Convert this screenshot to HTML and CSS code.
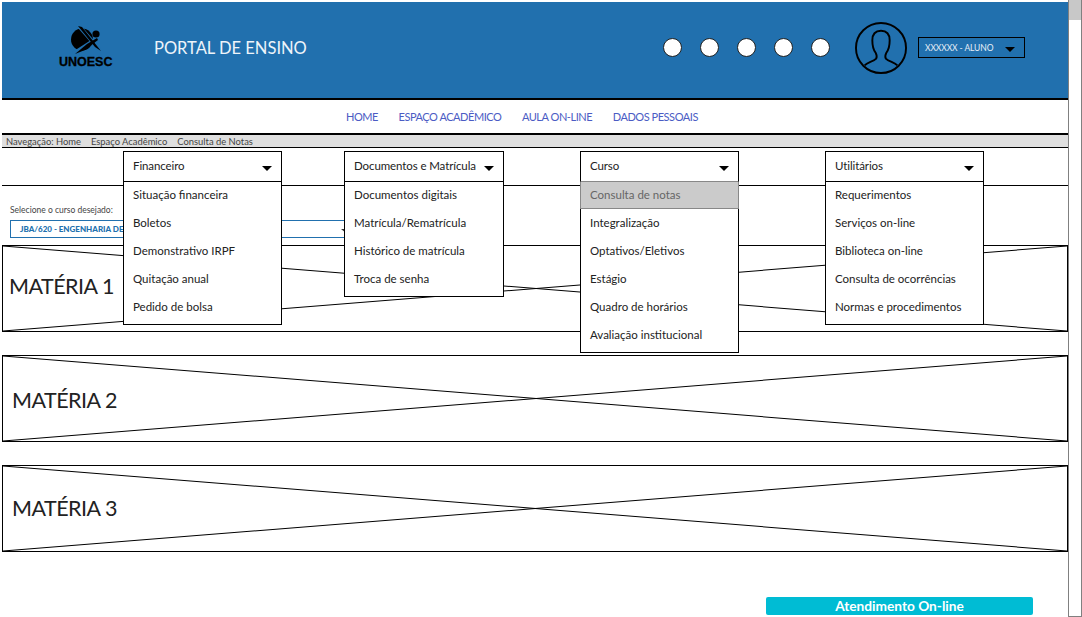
FILE: index.html
```html
<!DOCTYPE html>
<html lang="pt">

<head>
    <meta charset="utf-8">
    <title>Portal de Ensino</title>
    <link rel="stylesheet" href="styles.css">
</head>

<body>
    <div class="page">
        <header class="topbar">
            <div class="logo">
                <svg class="logo-mark" width="32" height="28" viewBox="0 0 32 28">
                    <circle class="logo-ball" cx="11" cy="13.500" r="11" />
                    <path class="logo-cut" d="M7 -1 L28 23" />
                    <path class="logo-cut" d="M2 28 L27 12" />
                    <path class="logo-ball" d="M7 0 L11 1 L30 25 L24 21 Z" />
                    <path class="logo-ball" d="M4 28 L16 18 L26 12 L27 14 L14 24 Z" />
                    <circle class="logo-ball" cx="25" cy="8" r="3.600" />
                </svg>
                <span class="logo-name">UNOESC</span>
            </div>
            <h1 class="title">PORTAL DE ENSINO</h1>
            <div class="dots">
                <span class="dot"></span>
                <span class="dot"></span>
                <span class="dot"></span>
                <span class="dot"></span>
                <span class="dot"></span>
            </div>
            <svg class="avatar" width="52" height="52" viewBox="0 0 54 54">
                <circle cx="27" cy="27" r="26" />
                <path d="M10 45 C13 42 19 41 22 38 C23 36 22.500 34 21.500 32 C19 29 18 25 18 19 C18 12 22 9 27 9 C32 9 36 12 36 19 C36 25 35 29 32.500 32 C31.500 34 31 36 32 38 C35 41 41 42 44 45" />
            </svg>
            <div class="user">
                <span>XXXXXX - ALUNO</span>
                <i class="caret"></i>
            </div>
        </header>

        <nav class="mainnav">
            <a href="#">HOME</a>
            <a href="#">ESPAÇO ACADÊMICO</a>
            <a href="#">AULA ON-LINE</a>
            <a href="#">DADOS PESSOAIS</a>
        </nav>

        <div class="crumbs">
            <span>Navegação: Home</span>
            <span>Espaço Acadêmico</span>
            <span>Consulta de Notas</span>
        </div>

        <div class="menus">
            <div class="menu menu-fin">
                <div class="menu-head">Financeiro <i class="caret"></i></div>
                <ul class="menu-list">
                    <li>Situação financeira</li>
                    <li>Boletos</li>
                    <li>Demonstrativo IRPF</li>
                    <li>Quitação anual</li>
                    <li>Pedido de bolsa</li>
                </ul>
            </div>
            <div class="menu menu-doc">
                <div class="menu-head">Documentos e Matrícula <i class="caret"></i></div>
                <ul class="menu-list">
                    <li>Documentos digitais</li>
                    <li>Matrícula/Rematrícula</li>
                    <li>Histórico de matrícula</li>
                    <li>Troca de senha</li>
                </ul>
            </div>
            <div class="menu menu-cur">
                <div class="menu-head">Curso <i class="caret"></i></div>
                <ul class="menu-list">
                    <li class="active">Consulta de notas</li>
                    <li>Integralização</li>
                    <li>Optativos/Eletivos</li>
                    <li>Estágio</li>
                    <li>Quadro de horários</li>
                    <li>Avaliação institucional</li>
                </ul>
            </div>
            <div class="menu menu-uti">
                <div class="menu-head">Utilitários <i class="caret"></i></div>
                <ul class="menu-list">
                    <li>Requerimentos</li>
                    <li>Serviços on-line</li>
                    <li>Biblioteca on-line</li>
                    <li>Consulta de ocorrências</li>
                    <li>Normas e procedimentos</li>
                </ul>
            </div>
        </div>

        <section class="course">
            <label class="course-label">Selecione o curso desejado:</label>
            <div class="course-box">
                <span class="course-name">JBA/620 - ENGENHARIA DE</span>
                <i class="caret"></i>
            </div>
        </section>

        <div class="card card-one">
            <svg class="cross" viewBox="0 0 100 100" preserveAspectRatio="none">
                <line x1="0" y1="0" x2="100" y2="100" />
                <line x1="0" y1="100" x2="100" y2="0" />
            </svg>
            <span class="card-name">MATÉRIA 1</span>
        </div>
        <div class="card card-two">
            <svg class="cross" viewBox="0 0 100 100" preserveAspectRatio="none">
                <line x1="0" y1="0" x2="100" y2="100" />
                <line x1="0" y1="100" x2="100" y2="0" />
            </svg>
            <span class="card-name">MATÉRIA 2</span>
        </div>
        <div class="card card-three">
            <svg class="cross" viewBox="0 0 100 100" preserveAspectRatio="none">
                <line x1="0" y1="0" x2="100" y2="100" />
                <line x1="0" y1="100" x2="100" y2="0" />
            </svg>
            <span class="card-name">MATÉRIA 3</span>
        </div>

        <button class="chat">Atendimento On-line</button>
    </div>

    <div class="scrollbar">
        <div class="thumb"></div>
    </div>
</body>

</html>
```

FILE: styles.css
```css
* {
    box-sizing: border-box;
}

html,
body {
    margin: 0;
    height: 617px;
    overflow: hidden;
}

body {
    display: flex;
    background-color: white;
    font-family: Lato, "Open Sans", sans-serif;
    color: #222;
}

.page {
    flex: 1;
    min-width: 0;
    padding: 2px 0 0 2px;
}

/* header */

.topbar {
    height: 98px;
    padding-bottom: 5px;
    display: flex;
    align-items: center;
    background-color: #2170ae;
    border-bottom: 2px solid black;
}

.logo {
    width: 95px;
    margin-left: 57px;
    display: flex;
    flex-direction: column;
    align-items: flex-start;
}

.logo-mark {
    margin-left: 12px;
    margin-bottom: 1px;
}

.logo-ball {
    fill: black;
}

.logo-cut {
    fill: none;
    stroke: #2170ae;
    stroke-width: 4;
}

.logo-name {
    font-family: "Liberation Sans", sans-serif;
    font-size: 12.500px;
    line-height: 14px;
    font-weight: bold;
    color: black;
    -webkit-text-stroke: 0.3px black;
}

.title {
    margin: 0;
    width: 509px;
    font-size: 16.500px;
    font-weight: normal;
    color: #eef4fa;
}

.dots {
    width: 192px;
    display: flex;
    justify-content: space-between;
    padding-right: 25px;
}

.dot {
    width: 19px;
    height: 19px;
    background-color: white;
    border: 1px solid #222;
    border-radius: 50%;
}

.avatar {
    fill: none;
    stroke: black;
    stroke-width: 2;
}

.user {
    width: 107px;
    height: 21px;
    margin-left: 11px;
    padding: 0 9px 0 6px;
    display: flex;
    align-items: center;
    justify-content: space-between;
    border: 1px solid black;
    font-size: 8.500px;
    letter-spacing: -0.1px;
    color: #e6eef6;
}

.caret {
    display: inline-block;
    width: 0;
    height: 0;
    margin-top: 3px;
    border-top: 5px solid black;
    border-left: 5px solid transparent;
    border-right: 5px solid transparent;
}

/* nav and breadcrumb */

.mainnav {
    height: 33px;
    padding-left: 344px;
    display: flex;
    align-items: center;
    gap: 20.500px;
    font-size: 11px;
    letter-spacing: -0.45px;
}

.mainnav a {
    color: #4b5cc4;
    text-decoration: none;
}

.crumbs {
    height: 15px;
    padding-left: 4px;
    display: flex;
    gap: 10px;
    align-items: center;
    background-color: #dfdfdf;
    border-top: 2px solid black;
    border-bottom: 1px solid black;
    font-size: 9.400px;
    color: #444;
}

/* dropdowns */

.menus {
    height: 38px;
    padding: 3px 0 0 121px;
    display: flex;
    align-items: flex-start;
    border-bottom: 1px solid black;
}

.menu {
    position: relative;
    z-index: 2;
    width: 159px;
    font-size: 11.500px;
}

.menu-doc {
    width: 160px;
    margin-left: 62px;
}

.menu-cur {
    margin-left: 76px;
}

.menu-uti {
    margin-left: 86px;
}

.menu-head {
    height: 31px;
    padding: 0 9px 2px;
    display: flex;
    align-items: center;
    justify-content: space-between;
    background-color: white;
    border: 1px solid black;
    letter-spacing: -0.1px;
}

.menu-head .caret {
    margin-top: 5px;
}

.menu-cur .menu-head {
    border-bottom-color: #888;
}

.menu-list {
    position: absolute;
    top: 31px;
    left: 0;
    right: 0;
    margin: 0;
    padding: 0 0 2px;
    list-style: none;
    background-color: white;
    border: 1px solid black;
    border-top: 0;
}

.menu-list li {
    height: 28px;
    padding: 0 9px 3px;
    display: flex;
    align-items: center;
}

.menu-list li.active {
    height: 27px;
    margin: 0 -1px 1px;
    padding: 0 10px 1px 9px;
    background-color: #cbcbcb;
    border: 1px solid #888;
    border-top: 0;
    color: #666;
}

/* course select */

.course {
    height: 59px;
    padding: 18px 0 0 8px;
}

.course-label {
    display: block;
    height: 16px;
    font-size: 8.500px;
    line-height: 12px;
    color: #444;
}

.course-box {
    width: 400px;
    height: 18px;
    padding-left: 9px;
    display: flex;
    align-items: center;
    border: 1px solid #2170ae;
    font-size: 8px;
    font-weight: 900;
    color: #2170ae;
    white-space: nowrap;
}

.course-name {
    width: 321px;
}

.course-box .caret {
    border-top-width: 4px;
    border-top-color: #333;
}

/* cards */

.card {
    position: relative;
    height: 87px;
    margin-bottom: 23px;
    display: flex;
    align-items: center;
    border: 1px solid black;
}

.card-one {
    padding: 0 0 6px 6px;
}

.card-two {
    padding: 2px 0 0 9px;
}

.card-three {
    padding: 0 0 2px 9px;
}

.cross {
    position: absolute;
    top: 0;
    left: 0;
    width: 100%;
    height: 100%;
}

.cross line {
    stroke: black;
    stroke-width: 1;
    vector-effect: non-scaling-stroke;
}

.card-name {
    position: relative;
    font-size: 21.500px;
    letter-spacing: -0.5px;
}

/* footer button */

.chat {
    display: block;
    width: 267px;
    height: 18px;
    margin: 45px 0 0 764px;
    padding: 0 0 2px;
    background-color: #00bcd4;
    border: 0;
    border-radius: 2px;
    font-family: inherit;
    font-size: 13.700px;
    font-weight: bold;
    color: white;
}

/* fake scrollbar */

.scrollbar {
    width: 14px;
    height: 617px;
    border: 1px solid #808080;
    border-top: 0;
}

.thumb {
    height: 20px;
    background-color: #c8c8c8;
}
```
